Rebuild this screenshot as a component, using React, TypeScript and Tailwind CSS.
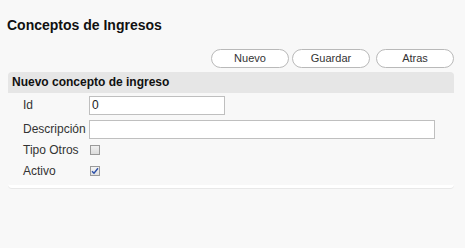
import React from 'react';

const btn =
  'h-[19px] w-[78px] rounded-[10px] border border-[#b9b9b9] bg-white text-[11px] text-[#333] leading-none';

const App = () => {
  return (
    <div className="min-h-[248px] w-[465px] bg-[#f8f8f8] font-['Liberation_Sans',Arial,sans-serif] text-[#222]">
      <div className="px-[7px] pt-[16px]">
        <h1 className="text-[14px] font-bold leading-[18px] text-[#111]">Conceptos de Ingresos</h1>
        <div className="mt-[15px] flex justify-end gap-[3px] pr-[4px]">
          <button className={btn}>Nuevo</button>
          <button className={btn}>Guardar</button>
          <button className={`${btn} ml-[3px]`}>Atras</button>
        </div>
        <div className="mt-[4px] ml-[1px] w-[446px] rounded-[4px] border-b-[3px] border-white bg-[#f8f8f8] shadow-[0_1px_0_#e8e8e8]">
          <div className="h-[21px] rounded-t-[4px] bg-[#e6e6e6] pl-[4px] text-[12px] font-bold leading-[21px] text-[#111]">
            Nuevo concepto de ingreso
          </div>
          <div className="flex flex-col pl-[15px] pt-[2px] pb-[5px] text-[12px] text-[#333]">
            <div className="flex h-[20px] items-center">
              <label className="w-[66px]">Id</label>
              <input
                defaultValue="0"
                className="h-[19px] w-[136px] border border-[#bfbfbf] bg-white px-[2px] text-[12px] text-[#222] outline-none"
              />
            </div>
            <div className="mt-[4px] flex h-[20px] items-center">
              <label className="w-[66px]">Descripción</label>
              <input className="h-[19px] w-[346px] border border-[#bfbfbf] bg-white px-[2px] text-[12px] outline-none" />
            </div>
            <div className="mt-[2px] flex h-[18px] items-center">
              <label className="w-[67px]">Tipo Otros</label>
              <span className="h-[10px] w-[10px] border border-[#9a9a9a] bg-gradient-to-b from-[#f0f0f0] to-[#dcdcdc]" />
            </div>
            <div className="mt-[3px] flex h-[18px] items-center">
              <label className="w-[67px]">Activo</label>
              <span className="flex h-[10px] w-[10px] items-center justify-center border border-[#9a9a9a] bg-gradient-to-b from-[#f4f4f4] to-[#e0e0e0]">
                <svg width="8" height="8" viewBox="0 0 8 8">
                  <path d="M1 4.2 L3 6.3 L7 1.2" fill="none" stroke="#2b4fa8" strokeWidth="1.4" />
                </svg>
              </span>
            </div>
          </div>
        </div>
      </div>
    </div>
  );
};

export default App;
